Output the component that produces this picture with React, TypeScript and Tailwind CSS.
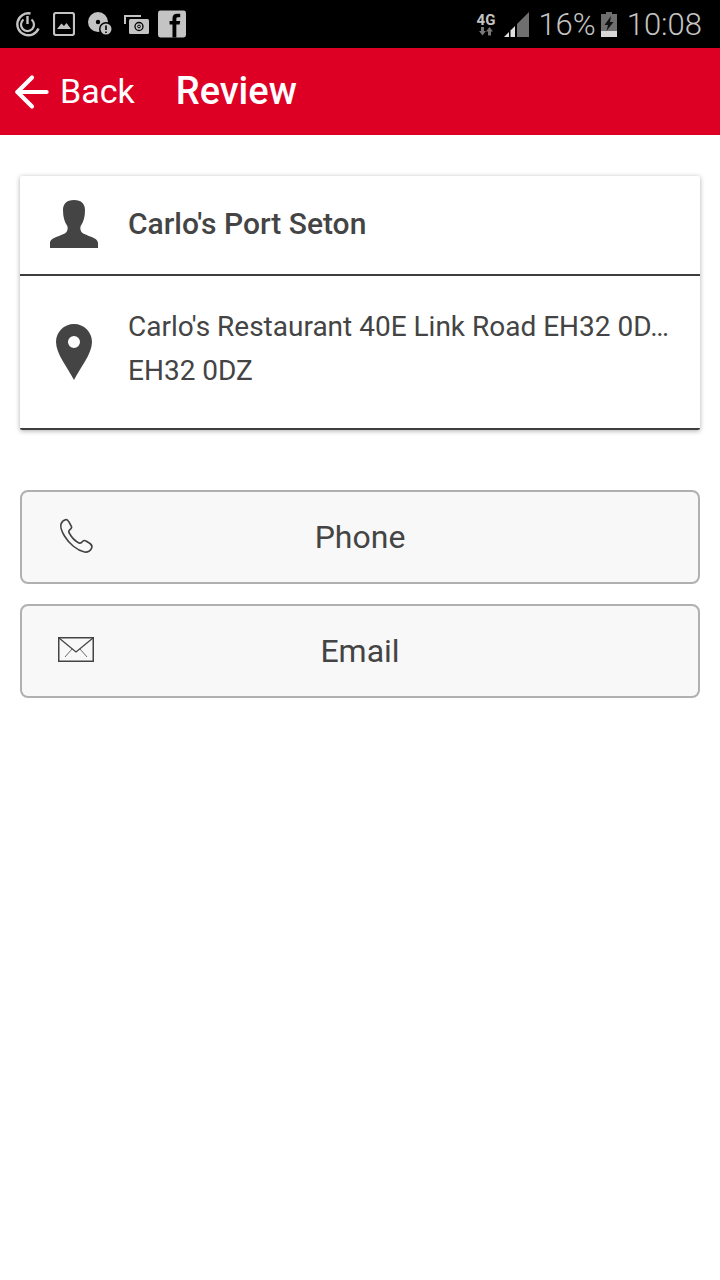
import { ArrowLeft } from 'lucide-react';

const roboto = "font-['Roboto',sans-serif]";

function StatusLeft() {
  return (
    <div className="flex items-center pl-[15px]">
      <svg width="25" height="25" viewBox="0 0 25 25" fill="none" stroke="#c4c4c4">
        <path d="M15.5 1.5 A11 11 0 1 0 23.5 16.5" strokeWidth="2.4" />
        <path d="M8.5 7.5 A6.5 6.5 0 1 0 16.5 7.5" strokeWidth="2.2" />
        <path d="M12.5 4 V12" strokeWidth="2.4" />
      </svg>
      <svg width="22" height="24" viewBox="0 0 22 24" className="ml-[13px]">
        <rect x="1" y="1" width="20" height="22" rx="2" fill="none" stroke="#c4c4c4" strokeWidth="2.2" />
        <path d="M4 17 L8.5 11.5 L11 14 L13.5 11 L18 17 Z" fill="#c4c4c4" />
      </svg>
      <svg width="24" height="24" viewBox="0 0 24 24" className="ml-[13px]">
        <circle cx="10" cy="10" r="10" fill="#c4c4c4" />
        <circle cx="10" cy="10" r="2.2" fill="#000" />
        <circle cx="18" cy="17" r="7" fill="#000" />
        <circle cx="18" cy="17" r="5.5" fill="#c4c4c4" />
        <path d="M18 13.5 V18 M18 19.5 V21" stroke="#000" strokeWidth="1.6" />
      </svg>
      <svg width="25" height="22" viewBox="0 0 25 22" className="ml-[12px]">
        <path d="M1 11 V3 H17" fill="none" stroke="#c4c4c4" strokeWidth="2" />
        <rect x="5" y="6" width="20" height="15" rx="1.5" fill="#c4c4c4" />
        <circle cx="15" cy="13.5" r="4" fill="none" stroke="#000" strokeWidth="1.3" />
        <circle cx="15" cy="13.5" r="1.4" fill="none" stroke="#000" strokeWidth="1" />
      </svg>
      <svg width="28" height="28" viewBox="0 0 29 28" className="ml-[9px]">
        <rect width="29" height="28" rx="2.5" fill="#c4c4c4" />
        <path d="M15 28 V14.5 H12 V11 H15 V8 C15 5 17 3.5 19.5 3.5 H23 V7 H20.5 C19.5 7 19 7.6 19 8.6 V11 H23 L22.4 14.5 H19 V28 Z" fill="#000" />
      </svg>
    </div>
  );
}

function StatusRight() {
  return (
    <div className="flex items-center pr-[18px]">
      <div className="flex flex-col items-center mr-[9px] mt-[1px]">
        <span className={`${roboto} text-[15px] leading-[13px] font-bold text-[#c4c4c4]`}>4G</span>
        <svg width="16" height="9" viewBox="0 0 16 9" fill="#777">
          <path d="M3 0 H6 V4 H8 L4.5 8.5 L1 4 H3 Z" />
          <path d="M10 8.5 H13 V4.5 H15 L11.5 0 L8 4.5 H10 Z" />
        </svg>
      </div>
      <svg width="25" height="25" viewBox="0 0 25 25" className="mr-[9px]">
        <path d="M0 25 L5 20 V25 Z" fill="#e0e0e0" />
        <path d="M6.5 18.5 L11 14 V25 H6.5 Z" fill="#e0e0e0" />
        <path d="M13 12 L25 0 V25 H13 Z" fill="#6f6f6f" />
      </svg>
      <span className={`${roboto} text-[31px] leading-none font-light text-[#c4c4c4]`}>16%</span>
      <svg width="16" height="25" viewBox="0 0 16 25" className="mr-[10px] ml-[5px]">
        <rect x="5" y="0" width="6" height="3" fill="#6f6f6f" />
        <rect x="0" y="2" width="16" height="23" fill="#6f6f6f" />
        <rect x="0" y="19" width="16" height="6" fill="#d8d8d8" />
        <path d="M10 4 L3.5 13 H7 L5.5 19 L12.5 10 H9 Z" fill="#111" />
      </svg>
      <span className={`${roboto} text-[31px] leading-none font-light text-[#c4c4c4]`}>10:08</span>
    </div>
  );
}

export default function App() {
  return (
    <div className={`${roboto} w-[720px] h-[1280px] bg-white flex flex-col`}>
      <div className="h-[48px] bg-black flex items-center justify-between">
        <StatusLeft />
        <StatusRight />
      </div>
      <header className="h-[87px] bg-[#de0024] flex items-center text-white">
        <ArrowLeft className="w-[50px] h-[50px] ml-[7px]" strokeWidth={2} />
        <span className="text-[34px] ml-[3px] mb-[1px]">Back</span>
        <h1 className="text-[38px] font-medium ml-[41px] mb-[1px]">Review</h1>
      </header>

      <div className="px-[20px] pt-[41px]">
        <div className="rounded-[2px] bg-white shadow-[0_1px_5px_rgba(0,0,0,0.32)] border-b-2 border-[#3e3e3e]">
          <div className="h-[100px] flex items-center border-b-2 border-[#3e3e3e]">
            <div className="w-[108px] flex justify-center shrink-0 mb-[2px]">
              <svg width="48" height="48" viewBox="0 0 48 48" fill="#444444">
                <path d="M24 0 C16.5 0 13 4 13 10 C13 17 14.5 22 17 25.5 C18 27 18 30 16.5 32 C13 36 0 37 0 43 V48 H48 V43 C48 37 35 36 31.5 32 C30 30 30 27 31 25.5 C33.5 22 35 17 35 10 C35 4 31.5 0 24 0 Z" />
              </svg>
            </div>
            <span className="text-[30px] font-medium text-[#444444] mb-[3px]">Carlo's Port Seton</span>
          </div>
          <div className="h-[152px] flex items-center">
            <div className="w-[108px] flex justify-center shrink-0">
              <svg width="36" height="56" viewBox="0 0 36 56">
                <path fillRule="evenodd" fill="#444444" d="M18 0 C8 0 0 8 0 18 C0 30 12 44 18 56 C24 44 36 30 36 18 C36 8 28 0 18 0 Z M18 12 A6 6 0 1 1 18 24 A6 6 0 1 1 18 12 Z" />
              </svg>
            </div>
            <div className="min-w-0 flex-1 mb-[6px] text-[28px] leading-[44px] text-[#444444]">
              <div className="whitespace-nowrap">Carlo's Restaurant 40E Link Road EH32 0D…</div>
              <div>EH32 0DZ</div>
            </div>
          </div>
        </div>

        <div className="mt-[60px] flex flex-col gap-[20px]">
          <button className="relative h-[94px] w-full rounded-[8px] border-2 border-[#b0b0b0] bg-[#f8f8f8] text-[32px] text-[#444444]">
            <svg className="absolute left-[36px] top-[26px]" width="36" height="36" viewBox="0 0 36 36" fill="none" stroke="#444444" strokeWidth="1.6">
              <path d="M3 6 C4 3 6 2 8 1.5 C9.5 1.5 10 2.5 11 4 L13.5 8.5 C14 10 13 11 11.5 12 C10.5 13 10.5 14 11.5 15.5 C14 20 17 23 21 25 C22.5 25.5 23.5 25 24.5 23.5 C25.5 22.5 26.5 22 28 23 L32 25.5 C34 27 34.5 28.5 33.5 30.5 C32 33 29.5 34.5 26.5 34 C19 32.5 11 25.5 6.5 18 C4 14 2 10 3 6 Z" />
            </svg>
            Phone
          </button>
          <button className="relative h-[94px] w-full rounded-[8px] border-2 border-[#b0b0b0] bg-[#f8f8f8] text-[32px] text-[#444444]">
            <svg className="absolute left-[36px] top-[31px]" width="36" height="26" viewBox="0 0 36 26" fill="none" stroke="#444444">
              <rect x="0.75" y="0.75" width="34.5" height="23.5" strokeWidth="1.5" />
              <path d="M1 1 L18 15 L35 1" strokeWidth="1.3" />
              <path d="M7 20 L14 12 M29 20 L22 12" strokeWidth="0.8" />
            </svg>
            Email
          </button>
        </div>
      </div>
    </div>
  );
}
